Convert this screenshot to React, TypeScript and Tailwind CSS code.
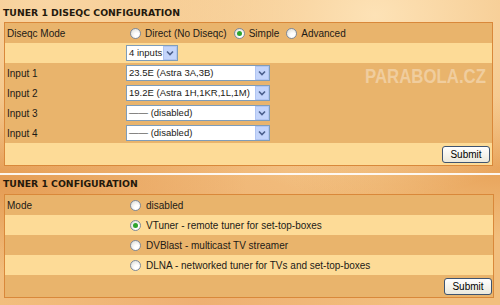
import React from 'react';

const Radio = ({ checked }: { checked?: boolean }) => (
  <span className="w-[11px] h-[11px] rounded-full border border-[#7d8a9c] bg-[radial-gradient(circle_at_65%_70%,#ffffff_25%,#d8d8d0_100%)] flex items-center justify-center shrink-0">
    {checked && <span className="w-[5px] h-[5px] rounded-full bg-[#2ea42e]" />}
  </span>
);

const Chevron = () => (
  <svg width="8" height="6" viewBox="0 0 8 6" fill="none">
    <path d="M1 1.5L4 4.5L7 1.5" stroke="#4a5f8c" strokeWidth="1.6" />
  </svg>
);

const Select = ({ value, width }: { value: string; width: string }) => (
  <div className={`${width} h-[16px] bg-white border border-[#7f9db9] flex items-center`}>
    <span className="flex-1 pl-[2px] whitespace-nowrap text-[9.5px] leading-[14px]">{value}</span>
    <span className="w-[14px] h-[14px] bg-[#c4d5fb] border border-[#b1c5f2] flex items-center justify-center shrink-0">
      <Chevron />
    </span>
  </div>
);

const SubmitButton = () => (
  <button className="w-[48px] h-[17px] rounded-[3px] border border-[#3f5470] bg-[linear-gradient(#ffffff,#ebe8dc)] text-[10px] leading-[15px] text-black">
    Submit
  </button>
);

const Row = ({ label, light, children }: { label?: string; light?: boolean; children?: React.ReactNode }) => (
  <div className={`h-[20px] flex items-center ${light ? 'bg-[#fddb97]' : ''}`}>
    <div className="w-[121px] pl-[2px] shrink-0">{label}</div>
    <div className="flex items-center">{children}</div>
  </div>
);

export default function App() {
  return (
    <div className="w-[500px] h-[305px] overflow-hidden font-['Liberation_Sans',Arial,sans-serif] text-[10px] text-[#1c1a16] bg-[#f2bf7e] bg-[radial-gradient(ellipse_at_75%_5%,#fde2b6_0%,transparent_45%),radial-gradient(ellipse_at_10%_0%,#f9d6a4_0%,transparent_40%),radial-gradient(ellipse_at_0%_60%,#e59c54_0%,transparent_35%),radial-gradient(ellipse_at_100%_55%,#e8a35a_0%,transparent_30%),radial-gradient(ellipse_at_40%_100%,#eeb072_0%,transparent_50%)]">
      {/* Diseqc */}
      <div className="px-[3px]">
        <div className="h-[22px] pt-[7px] leading-[11px] font-['DejaVu_Sans',Verdana,sans-serif] font-bold text-[9.3px] text-[#24190c]">
          TUNER 1 DISEQC CONFIGURATION
        </div>
        <div className="relative ml-[1px] w-[489px] border border-[#d9883a] bg-[#e9b46c]">
          <Row label="Diseqc Mode">
            <span className="ml-[4px]"><Radio /></span>
            <span className="ml-[4px]">Direct (No Diseqc)</span>
            <span className="ml-[7px]"><Radio checked /></span>
            <span className="ml-[4px]">Simple</span>
            <span className="ml-[7px]"><Radio /></span>
            <span className="ml-[4px]">Advanced</span>
          </Row>
          <Row light>
            <Select value="4 inputs" width="w-[52px]" />
          </Row>
          <Row label="Input 1">
            <Select value="23.5E (Astra 3A,3B)" width="w-[144px]" />
          </Row>
          <Row label="Input 2">
            <Select value="19.2E (Astra 1H,1KR,1L,1M)" width="w-[144px]" />
          </Row>
          <Row label="Input 3">
            <Select value="—— (disabled)" width="w-[144px]" />
          </Row>
          <Row label="Input 4">
            <Select value="—— (disabled)" width="w-[144px]" />
          </Row>
          <div className="h-[22px] bg-[#fddb97] flex items-center justify-end pr-[2px]">
            <SubmitButton />
          </div>
          <div className="absolute left-[360px] top-[43px] text-[20px] font-bold text-white/35 scale-x-[0.84] origin-left leading-[20px]">
            PARABOLA.CZ
          </div>
        </div>
      </div>

      <div className="mt-[7px] h-[2px] bg-white/90" />

      {/* Tuner */}
      <div className="px-[3px]">
        <div className="h-[19px] pt-[3px] leading-[11px] font-['DejaVu_Sans',Verdana,sans-serif] font-bold text-[9.3px] text-[#24190c]">
          TUNER 1 CONFIGURATION
        </div>
        <div className="ml-[1px] w-[490px] border border-[#d9883a] bg-[#e9b46c]">
          <Row label="Mode">
            <span className="ml-[4px]"><Radio /></span>
            <span className="ml-[5px]">disabled</span>
          </Row>
          <Row light>
            <span className="ml-[4px]"><Radio checked /></span>
            <span className="ml-[5px]">VTuner - remote tuner for set-top-boxes</span>
          </Row>
          <Row>
            <span className="ml-[4px]"><Radio /></span>
            <span className="ml-[5px]">DVBlast - multicast TV streamer</span>
          </Row>
          <Row light>
            <span className="ml-[4px]"><Radio /></span>
            <span className="ml-[5px]">DLNA - networked tuner for TVs and set-top-boxes</span>
          </Row>
          <div className="h-[22px] flex items-center justify-end pr-[1px]">
            <SubmitButton />
          </div>
        </div>
      </div>
    </div>
  );
}
